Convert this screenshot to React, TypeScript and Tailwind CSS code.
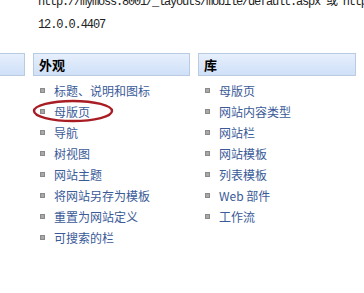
const looks = ['标题、说明和图标', '母版页', '导航', '树视图', '网站主题', '将网站另存为模板', '重置为网站定义', '可搜索的栏'];
const library = ['母版页', '网站内容类型', '网站栏', '网站模板', '列表模板', 'Web 部件', '工作流'];

const cjk = "font-['Noto_Sans_CJK_SC','Noto_Sans',sans-serif]";

function SectionHeader({ title }: { title?: string }) {
  return (
    <div className="h-[23px] flex items-center pl-[5px] border border-[#b9cbe3] bg-gradient-to-b from-[#e6effc] to-[#cfe0f8] text-[13px] font-bold text-black leading-none">
      {title}
    </div>
  );
}

function LinkList({ items, circled }: { items: string[]; circled?: number }) {
  return (
    <ul className="mt-[4px] pl-[7px] flex flex-col">
      {items.map((t, i) => (
        <li key={t} className="relative h-[21px] flex items-center gap-[9px]">
          <span className="w-[5px] h-[5px] bg-[#a8a8a8] border border-[#8a8a8a] shrink-0" />
          <span className="text-[12px] text-[#3a5a98] leading-none whitespace-nowrap">{t}</span>
          {circled === i && (
            <svg className="absolute left-[-8px] top-[-2px] pointer-events-none" width="84" height="24" viewBox="0 0 84 24">
              <ellipse cx="41" cy="12" rx="39" ry="10" fill="none" stroke="#a81c24" strokeWidth="2.4" />
            </svg>
          )}
        </li>
      ))}
    </ul>
  );
}

export default function App() {
  return (
    <div className={`w-[364px] h-[293px] overflow-hidden bg-white ${cjk}`}>
      <div className="pl-[38px] -mt-[6px] font-['Liberation_Mono','Noto_Sans_CJK_SC',monospace] text-[12px] tracking-[-1.2px] text-[#222] leading-[16px] whitespace-nowrap">
        http://mymoss:8001/_layouts/mobile/default.aspx 或 http://
      </div>
      <div className="pl-[38px] mt-[7px] font-['Liberation_Mono','Noto_Sans_CJK_SC',monospace] text-[12px] text-[#222] leading-[16px] tracking-[-1.1px]">
        12.0.0.4407
      </div>
      <div className="mt-[20px] flex gap-[8px]">
        <div className="w-[26px] ml-[-1px]">
          <SectionHeader />
        </div>
        <div className="w-[157px]">
          <SectionHeader title="外观" />
          <LinkList items={looks} circled={1} />
        </div>
        <div className="w-[158px]">
          <SectionHeader title="库" />
          <LinkList items={library} />
        </div>
      </div>
    </div>
  );
}
